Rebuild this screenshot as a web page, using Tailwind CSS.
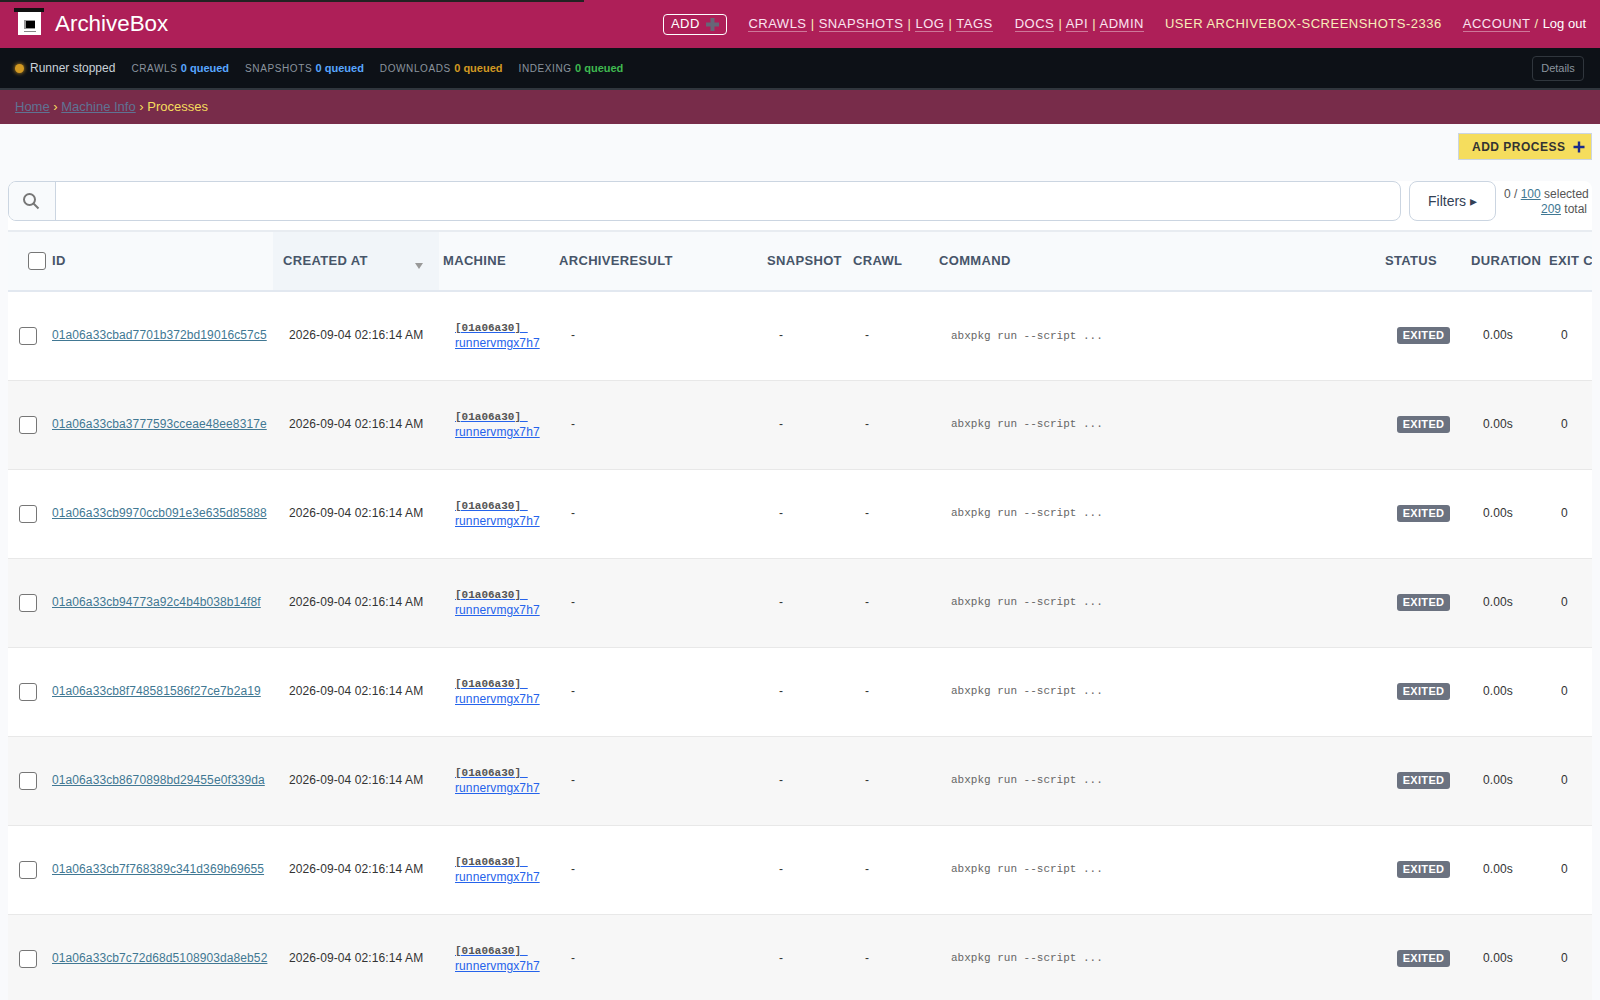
<!DOCTYPE html>
<html lang="en">
<head>
    <meta charset="UTF-8">
    <title>Processes | ArchiveBox</title>
    <script src="https://cdn.jsdelivr.net/npm/@tailwindcss/browser@4"></script>
</head>
<body class="relative min-h-screen overflow-hidden bg-[#f9fafc] font-['Liberation_Sans',Arial,sans-serif] text-[#333]">
    <!-- progress line over the top of the header -->
    <div class="absolute left-0 top-0 h-[2px] w-[584px] bg-[#222]"></div>

    <header class="flex h-12 items-center bg-[#ae1f58] pl-[14px] pr-[14px] text-white">
        <svg width="30" height="27" viewBox="0 0 30 27" class="mt-[-5px] shrink-0">
            <rect x="0" y="0" width="30" height="4" fill="#111"/>
            <rect x="4" y="4" width="23" height="23" fill="#fff"/>
            <rect x="10" y="12" width="11" height="9" fill="#999"/>
            <rect x="12" y="13" width="9" height="7" fill="#000"/>
            <rect x="10" y="23" width="12" height="1" fill="#888"/>
        </svg>
        <a class="mb-[1px] ml-[11px] text-[22.400px] font-normal">ArchiveBox</a>
        <nav class="ml-auto flex items-center gap-[21px] text-[13px] tracking-[0.5px] uppercase">
            <a class="flex h-[21px] w-[64px] items-center justify-center gap-[5px] rounded-[4px] border border-white">ADD
                <svg width="15" height="15" viewBox="0 0 15 15"><path d="M5.5 1h4v4.500h4.500v4h-4.500v4.500h-4v-4.500h-4.500v-4h4.500z" fill="#667"/></svg>
            </a>
            <div class="mr-[1px] text-[#f9edb8]"><a class="border-b border-white/40 text-[#fbe4f0]">Crawls</a> | <a class="border-b border-white/40 text-[#fbe4f0]">Snapshots</a> | <a class="border-b border-white/40 text-[#fbe4f0]">Log</a> | <a class="border-b border-white/40 text-[#fbe4f0]">Tags</a></div>
            <div class="text-[#f9edb8]"><a class="border-b border-white/40 text-[#fbe4f0]">Docs</a> | <a class="border-b border-white/40 text-[#fbe4f0]">API</a> | <a class="border-b border-white/40 text-[#fbe4f0]">Admin</a></div>
            <div class="text-[#f9edb8]">User archivebox-screenshots-2336</div>
            <div class="text-[#f9edb8]"><a class="border-b border-white/40 text-[#fbe4f0]">Account</a> / <span class="text-[13px] tracking-normal normal-case text-white">Log out</span></div>
        </nav>
    </header>

    <div class="flex h-[42px] items-center border-b-2 border-[#30363d] bg-[#0d1117] pl-[15px] pr-4">
        <span class="h-[9px] w-[9px] rounded-full bg-[#d29922] shadow-[0_0_4px_#d29922]"></span>
        <span class="ml-[6px] text-[12px] text-[#c9d1d9]">Runner stopped</span>
        <div class="ml-4 flex gap-4 text-[10px]">
            <div class="tracking-[0.6px] text-[#8b949e]">CRAWLS <b class="text-[11px] font-bold tracking-normal text-[#58a6ff]">0 queued</b></div>
            <div class="tracking-[0.6px] text-[#8b949e]">SNAPSHOTS <b class="text-[11px] font-bold tracking-normal text-[#58a6ff]">0 queued</b></div>
            <div class="tracking-[0.6px] text-[#8b949e]">DOWNLOADS <b class="text-[11px] font-bold tracking-normal text-[#d29922]">0 queued</b></div>
            <div class="tracking-[0.6px] text-[#8b949e]">INDEXING <b class="text-[11px] font-bold tracking-normal text-[#3fb950]">0 queued</b></div>
        </div>
        <button class="ml-auto h-[25px] w-[52px] rounded-[4px] border border-[#30363d] text-[11px] text-[#8b949e]">Details</button>
    </div>

    <div class="flex h-[34px] items-center bg-[#782c4a] pl-[15px] text-[13px] text-[#f5dd5d]">
        <a class="text-[#5f7393] underline">Home</a>&nbsp;›&nbsp;<a class="text-[#5f7393] underline">Machine Info</a>&nbsp;›&nbsp;Processes
    </div>

    <main class="px-2">
        <div class="flex justify-end pt-[9px]">
            <a class="flex h-[27px] w-[134px] items-center gap-[7px] border border-[#cbd5e1] bg-[#f5dd5d] pl-[13px] text-[12px] font-bold tracking-[0.5px] text-[#333]">ADD PROCESS
                <svg width="12" height="12" viewBox="0 0 12 12"><path d="M6 0.500v11M0.500 6h11" stroke="#1a2a8c" stroke-width="2.400"/></svg>
            </a>
        </div>

        <div class="mt-[21px] flex h-[49px] items-start rounded-t-lg bg-white">
            <div class="flex h-10 flex-1 items-stretch overflow-hidden rounded-lg border border-[#cbd5e1] bg-white">
                <div class="flex w-[47px] items-center justify-center border-r border-[#cbd5e1] bg-[#f8fafc] pr-[3px]">
                    <svg width="18" height="18" viewBox="0 0 18 18" fill="none" stroke="#777" stroke-width="2"><circle cx="7.500" cy="7.500" r="5.500"/><path d="M11.500 11.500L16.500 16.500"/></svg>
                </div>
            </div>
            <button class="ml-2 h-10 w-[87px] rounded-lg border border-[#cbd5e1] bg-white text-[14px] text-[#334155]">Filters ▸</button>
            <div class="ml-2 w-[88px] pr-[5px] pt-[6px] text-right text-[12px] leading-[15px] text-[#555]">
                <div class="whitespace-nowrap">0 / <a class="text-[#417893] underline">100</a> selected</div>
                <div><a class="text-[#417893] underline">209</a> total</div>
            </div>
        </div>

        <div class="overflow-hidden">
            <table class="w-[1620px] table-fixed border-collapse bg-white text-[12px] tracking-[0.1px] text-[#333]">
                <colgroup>
                    <col class="w-[40px]"><col class="w-[225px]"><col class="w-[166px]"><col class="w-[116px]"><col class="w-[208px]"><col class="w-[86px]"><col class="w-[86px]"><col class="w-[446px]"><col class="w-[86px]"><col class="w-[78px]"><col class="w-[83px]">
                </colgroup>
                <thead>
                    <tr class="h-[60px] border-y-2 border-t-[#e8ecf1] border-b-[#e2e8f0] bg-[#f8fafc] text-left text-[13px] font-bold tracking-[0.33px] whitespace-nowrap text-[#475569]">
                        <th class="pl-5"><input type="checkbox" class="block h-[18px] w-[18px] appearance-none rounded-[3px] border border-[#767676] bg-white"></th>
                        <th class="pl-1">ID</th>
                        <th class="relative bg-[#f1f5f9] pl-[10px]">CREATED AT<span class="absolute right-[16px] top-[31px] h-0 w-0 border-x-[4.500px] border-t-[6px] border-x-transparent border-t-[#999]"></span></th>
                        <th class="pl-1">MACHINE</th>
                        <th class="pl-1">ARCHIVERESULT</th>
                        <th class="pl-1">SNAPSHOT</th>
                        <th class="pl-1">CRAWL</th>
                        <th class="pl-1">COMMAND</th>
                        <th class="pl-1">STATUS</th>
                        <th class="pl-1">DURATION</th>
                        <th class="pl-1">EXIT CODE</th>
                    </tr>
                </thead>
                <tbody id="rows"></tbody>
            </table>
        </div>
    </main>

    <script>
        const ids = [
            '01a06a33cbad7701b372bd19016c57c5',
            '01a06a33cba3777593cceae48ee8317e',
            '01a06a33cb9970ccb091e3e635d85888',
            '01a06a33cb94773a92c4b4b038b14f8f',
            '01a06a33cb8f748581586f27ce7b2a19',
            '01a06a33cb8670898bd29455e0f339da',
            '01a06a33cb7f768389c341d369b69655',
            '01a06a33cb7c72d68d5108903da8eb52'
        ];
        document.getElementById('rows').innerHTML = ids.map((id) => `
            <tr class="h-[89px] border-b border-[#e8e8e8] even:bg-[#f7f7f7]">
                <td class="pl-[11px]"><input type="checkbox" class="block h-[18px] w-[18px] appearance-none rounded-[3px] border border-[#767676] bg-white"></td>
                <td class="pb-[2px] pl-1 whitespace-nowrap"><a class="text-[#417893] underline">${id}</a></td>
                <td class="pb-[2px] pl-4 whitespace-nowrap">2026-09-04 02:16:14 AM</td>
                <td class="pl-4 leading-[15px] whitespace-nowrap"><a class="text-[#2563eb] underline"><code class="font-['Liberation_Mono',monospace] text-[11px] font-bold tracking-normal text-[#555]">[01a06a30]</code><span class="font-['Liberation_Mono',monospace] text-[11px]">&nbsp;</span><br>runnervmgx7h7</a></td>
                <td class="pb-[2px] pl-4">-</td>
                <td class="pb-[2px] pl-4">-</td>
                <td class="pb-[2px] pl-4">-</td>
                <td class="pl-4 font-['Liberation_Mono',monospace] text-[11px] tracking-normal whitespace-nowrap text-[#666]">abxpkg run --script ...</td>
                <td class="pb-[2px] pl-4"><span class="inline-block h-[17px] w-[53px] rounded-[3px] bg-[#6b7280] text-center text-[11px] leading-[17px] font-bold tracking-[0.3px] text-white">EXITED</span></td>
                <td class="pb-[2px] pl-4">0.00s</td>
                <td class="pb-[2px] pl-4">0</td>
            </tr>`).join('');
    </script>
</body>
</html>
